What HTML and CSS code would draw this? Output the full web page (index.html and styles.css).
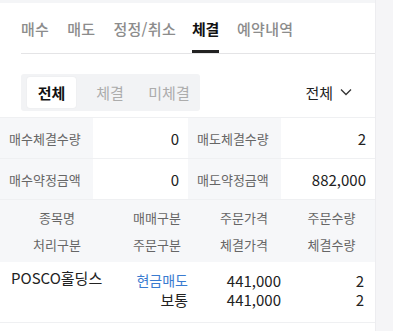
FILE: index.html
```html
<!DOCTYPE html>
<html lang="ko">

<head>
  <meta charset="UTF-8">
  <meta name="viewport" content="width=device-width, initial-scale=1.0">
  <title> 체결 </title>
  <link rel="stylesheet" href="styles.css">
</head>

<body>
  <div class="page">
    <div class="content">
      <ul class="tabs">
        <li>매수</li>
        <li>매도</li>
        <li>정정/취소</li>
        <li class="on">체결</li>
        <li>예약내역</li>
      </ul>

      <div class="filter">
        <div class="seg">
          <span class="on">전체</span>
          <span>체결</span>
          <span>미체결</span>
        </div>
        <div class="select">
          전체
          <svg width="14" height="14" viewBox="0 0 14 14">
            <path d="M2 4.5 L7 9.5 L12 4.5" fill="none" stroke="#333" stroke-width="1.3" />
          </svg>
        </div>
      </div>

      <div class="summary">
        <div class="label">매수체결수량</div>
        <div class="value">0</div>
        <div class="label">매도체결수량</div>
        <div class="value">2</div>
        <div class="label">매수약정금액</div>
        <div class="value">0</div>
        <div class="label">매도약정금액</div>
        <div class="value">882,000</div>
      </div>

      <div class="head">
        <span>종목명</span>
        <span>매매구분</span>
        <span>주문가격</span>
        <span>주문수량</span>
        <span>처리구분</span>
        <span>주문구분</span>
        <span>체결가격</span>
        <span>체결수량</span>
      </div>

      <div class="row">
        <div class="name">POSCO홀딩스</div>
        <div class="cols">
          <span class="sell">현금매도</span>
          <span>441,000</span>
          <span>2</span>
          <span>보통</span>
          <span>441,000</span>
          <span>2</span>
        </div>
      </div>
    </div>
    <div class="side"></div>
  </div>
</body>

</html>
```

FILE: styles.css
```css
* {
  margin: 0;
  padding: 0;
  box-sizing: border-box;
}

ul {
  list-style: none;
}

body {
  font-family: "Noto Sans CJK KR", "Noto Sans", sans-serif;
  color: #222;
  background: #fff;
}

.page {
  display: flex;
  height: 331px;
}

.content {
  width: 375px;
  border-top: 3px solid #f4f5f7;
}

.side {
  flex: 1;
  background: #f5f5f7;
  border-left: 1px solid #ededf0;
}

.tabs {
  display: flex;
  gap: 18px;
  margin-left: 21px;
  height: 51px;
  border-bottom: 1px solid #e4e4e6;
}

.tabs li {
  font-size: 15px;
  line-height: 20px;
  padding-top: 16px;
  color: #8c8c8c;
  font-weight: 500;
  letter-spacing: 0.3px;
}

.tabs li.on {
  color: #111;
  font-weight: 700;
  letter-spacing: -0.3px;
  margin-left: -2px;
  border-bottom: 3px solid #222;
}

.filter {
  display: flex;
  justify-content: space-between;
  align-items: center;
  padding: 13px 22px 0 21px;
  height: 63px;
}

.seg {
  display: flex;
  width: 179px;
  height: 37px;
  padding: 3px 6px;
  background: #f2f3f5;
  border-radius: 3px;
}

.seg span {
  display: flex;
  align-items: center;
  justify-content: center;
  font-size: 15px;
  color: #acacac;
}

.seg span:nth-child(1) {
  width: 49px;
}

.seg span:nth-child(2) {
  width: 68px;
}

.seg span:nth-child(3) {
  width: 50px;
}

.seg span.on {
  background: #fff;
  color: #111;
  font-weight: 700;
  border-radius: 3px;
  box-shadow: 0 0 2px rgba(0, 0, 0, .06);
}

.select {
  display: flex;
  align-items: center;
  gap: 6px;
  font-size: 15px;
  color: #222;
}

.summary {
  display: grid;
  grid-template-columns: 93px 95px 93px 94px;
  border-top: 1px solid #eff0f2;
}

.summary div {
  height: 41px;
  display: flex;
  align-items: center;
  border-bottom: 1px solid #eff0f2;
}

.summary .label {
  background: #f6f7f9;
  font-size: 13px;
  color: #666;
  padding-left: 9px;
}

.summary .value {
  justify-content: flex-end;
  font-size: 15px;
  color: #222;
  padding-right: 9px;
}

.head {
  display: grid;
  grid-template-columns: 114px 86px 88px 87px;
  grid-auto-rows: 27px;
  padding-top: 4px;
  height: 62px;
  background: #f6f7f9;
}

.head span {
  display: flex;
  align-items: center;
  justify-content: center;
  font-size: 13px;
  color: #666;
}

.row {
  display: flex;
  height: 61px;
  padding-top: 6px;
  border-bottom: 1px solid #eff0f2;
}

.name {
  width: 116px;
  padding-left: 11px;
  font-size: 15px;
  line-height: 20px;
  color: #222;
}

.cols {
  display: grid;
  grid-template-columns: 72px 93px 83px;
  grid-auto-rows: 19px;
  padding-top: 3px;
}

.cols span {
  text-align: right;
  font-size: 15px;
  line-height: 19px;
  color: #222;
}

.cols .sell {
  color: #3a7bd0;
  font-size: 14px;
}
```
